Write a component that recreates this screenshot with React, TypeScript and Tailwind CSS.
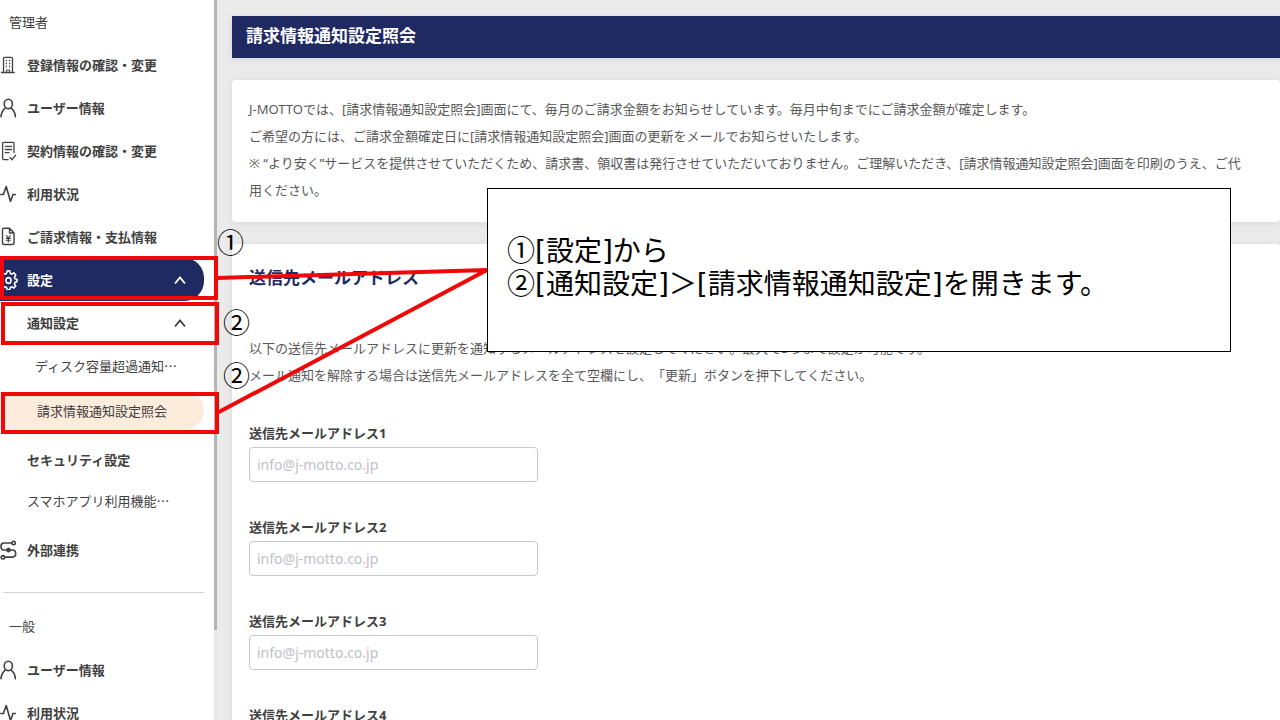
import type { ReactNode } from "react";

function Icon({ children }: { children: ReactNode }) {
  return (
    <svg
      viewBox="0 0 18 20"
      className="h-5 w-[18px] shrink-0"
      fill="none"
      stroke="currentColor"
      strokeWidth="1.6"
      strokeLinecap="round"
      strokeLinejoin="round"
      aria-hidden="true"
    >
      {children}
    </svg>
  );
}

const BuildingIcon = () => (
  <Icon>
    <path d="M3.500 17.300V3.500q0-1.200 1.200-1.200h6.600q1.200 0 1.200 1.200v13.800M1.500 17.500h12.700" strokeWidth="1.300" />
    <path d="M5.700 5.500h1.200M9 5.500h1.200M5.700 8.500h1.200M9 8.500h1.200M5.700 11.500h1.200M9 11.500h1.200" strokeWidth="1.500" strokeLinecap="butt" />
    <path d="M6.500 17.500v-2.500h3v2.500" strokeWidth="1" />
  </Icon>
);

const UserIcon = () => (
  <Icon>
    <ellipse cx="8.300" cy="5.900" rx="4.100" ry="4.700" />
    <path d="M1 18.700c.3-4.200 2.300-7.200 4.600-8.800M15.400 18.700c-.3-4.200-2.300-7.200-4.600-8.800" />
  </Icon>
);

const ContractIcon = () => (
  <Icon>
    <path d="M14 11.500V2.500q0-1.200-1.200-1.200H3.800Q2.600 1.300 2.600 2.500v14.800q0 1.400 1.300 1.400h4.300" strokeWidth="1.300" />
    <path d="M5.300 5.300h6.300M5.300 8.500h6.300M5.300 11.700h3.700M10 16.500l2.100 2.200 3.600-4.500" strokeWidth="1.300" />
  </Icon>
);

const ActivityIcon = () => (
  <Icon>
    <path d="M.8 10.500h2.600L6.200 2.500l4.300 15 2.500-7h2.400" />
  </Icon>
);

const BillIcon = () => (
  <Icon>
    <path d="M9.500 1.200H4Q2.500 1.200 2.500 2.700V16Q2.500 17.500 4 17.500h8.500q1.500 0 1.500-1.500V6L9.500 1.200V6H14" strokeWidth="1.400" />
    <path d="M6.300 8.500l2 2.700 2-2.700M8.300 11.200v3.800M6.300 11.400h4M6.300 13.200h4" strokeWidth="1.100" />
  </Icon>
);

const GearIcon = () => (
  <Icon>
    <path d="M7.200.9h2.500l.6 2.500 1.400.8 2.100-1.400 1.900 2.200-1.300 2.300.5 1.500 2.100.4v2.500l-2.100.6-.5 1.500 1.300 2.200-1.800 2.100-2.100-1.300-1.500.7-.6 2.300H7.200l-.6-2.300-1.500-.7L3 18.100 1.200 16l1.300-2.200-.5-1.500-1.800-.6V9.200L2 8.800l.5-1.500L1.200 5l1.900-2.200 2.100 1.400 1.400-.8z" />
    <ellipse cx="8.500" cy="10.500" rx="2.500" ry="2.900" />
  </Icon>
);

const LinkIcon = () => (
  <Icon>
    <circle cx="13.600" cy="3" r="1.700" />
    <circle cx="2.900" cy="17.300" r="1.700" />
    <path d="M11.700 3H4Q1 3 1 6.400T4 10h8.500q3.200 0 3.200 3.500t-3.200 3.600H5" />
    <ellipse cx="8.500" cy="10" rx="1.500" ry="1.700" fill="currentColor" />
  </Icon>
);

const Chevron = () => (
  <svg
    viewBox="0 0 12 10"
    className="h-[10px] w-3"
    fill="none"
    stroke="currentColor"
    strokeWidth="1.800"
    aria-hidden="true"
  >
    <path d="M1 8.500L6 2.500l5 6" />
  </svg>
);

function NavItem({ icon, label }: { icon: ReactNode; label: string }) {
  return (
    <a href="#" className="flex h-[43px] shrink-0 items-center gap-[9px] font-bold">
      {icon}
      {label}
    </a>
  );
}

function Sidebar() {
  return (
    <aside className="flex w-[217px] shrink-0 font-['Noto_Sans_CJK_JP',sans-serif]">
      <nav className="flex min-w-0 flex-1 flex-col overflow-hidden bg-white pr-[10px] text-[13px] whitespace-nowrap text-[#404040]">
        <h2 className="flex h-[43px] shrink-0 items-center pl-[9px]">管理者</h2>
        <NavItem icon={<BuildingIcon />} label="登録情報の確認・変更" />
        <NavItem icon={<UserIcon />} label="ユーザー情報" />
        <NavItem icon={<ContractIcon />} label="契約情報の確認・変更" />
        <NavItem icon={<ActivityIcon />} label="利用状況" />
        <NavItem icon={<BillIcon />} label="ご請求情報・支払情報" />
        <button
          type="button"
          aria-expanded="true"
          className="flex h-[43px] shrink-0 items-center gap-[9px] rounded-r-[20px] bg-[#1f2a63] pr-[18px] font-bold text-white"
        >
          <GearIcon />
          <span className="flex flex-1">設定</span>
          <Chevron />
        </button>
        <button
          type="button"
          aria-expanded="true"
          className="flex h-[43px] shrink-0 items-center pr-[18px] pl-[27px] font-bold"
        >
          <span className="flex flex-1">通知設定</span>
          <Chevron />
        </button>
        <a href="#" className="flex h-[43px] shrink-0 items-center pl-[35px]">
          ディスク容量超過通知…
        </a>
        <a href="#" aria-current="page" className="mt-[5px] flex h-[37px] shrink-0 items-center rounded-r-[18px] bg-[#fdebdb] pl-[37px]">
          請求情報通知設定照会
        </a>
        <a href="#" className="mt-[11px] flex h-10 shrink-0 items-center pl-[27px] font-bold">
          セキュリティ設定
        </a>
        <a href="#" className="flex h-[42px] shrink-0 items-center pl-[27px]">
          スマホアプリ利用機能…
        </a>
        <div className="mt-[6px] flex shrink-0 flex-col">
          <NavItem icon={<LinkIcon />} label="外部連携" />
        </div>
        <hr className="mt-[21px] ml-[3px] shrink-0 border-[#d4d4d4]" />
        <h2 className="mt-[11px] flex h-11 shrink-0 items-center pl-[9px]">一般</h2>
        <NavItem icon={<UserIcon />} label="ユーザー情報" />
        <NavItem icon={<ActivityIcon />} label="利用状況" />
      </nav>
      <div className="w-[3px] bg-[#e8e8e8]">
        <div className="h-[630px] bg-[#b4b4b4]" />
      </div>
    </aside>
  );
}

function Field({ n }: { n: number }) {
  const id = `mail-${n}`;
  return (
    <div className="flex h-[94px] shrink-0 flex-col">
      <label htmlFor={id} className="flex h-[27px] items-center font-bold text-[#404040]">
        送信先メールアドレス{n}
      </label>
      <input
        id={id}
        type="email"
        placeholder="info@j-motto.co.jp"
        className="h-[35px] w-[289px] rounded border border-[#c8c8cb] bg-white px-[7px] text-[14px] placeholder:text-[#bfc1c9]"
      />
    </div>
  );
}

function Content() {
  return (
    <main className="flex min-w-0 flex-1 flex-col overflow-hidden pt-4 pl-[15px] text-[13px] leading-[27px] text-[#595959]">
      <h1 className="flex h-[42px] shrink-0 items-center bg-[#1f2a63] px-[14px] pb-1 text-[17px] font-bold text-white shadow-[0_1px_6px_#d4d4d8]">
        請求情報通知設定照会
      </h1>
      <section className="mt-[22px] shrink-0 rounded bg-white pt-4 pr-[30px] pb-[18px] pl-[17px] shadow-[0_1px_8px_#d8d8d8]">
        <p>J-MOTTOでは、[請求情報通知設定照会]画面にて、毎月のご請求金額をお知らせしています。毎月中旬までにご請求金額が確定します。</p>
        <p>ご希望の方には、ご請求金額確定日に[請求情報通知設定照会]画面の更新をメールでお知らせいたします。</p>
        <p>
          ※ “より安く”サービスを提供させていただくため、請求書、領収書は発行させていただいておりません。ご理解いただき、[請求情報通知設定照会]画面を印刷のうえ、ご代用ください。
        </p>
      </section>
      <section className="mt-[22px] flex-1 shrink-0 rounded-t bg-white px-[17px] pt-5 shadow-[0_1px_8px_#d8d8d8]">
        <h2 className="text-[17px] font-bold text-[#1f2a63]">送信先メールアドレス</h2>
        <div className="mt-11">
          <p>以下の送信先メールアドレスに更新を通知するメールアドレスを設定してください。最大で5つまで設定が可能です。</p>
          <p>メール通知を解除する場合は送信先メールアドレスを全て空欄にし、「更新」ボタンを押下してください。</p>
        </div>
        <form className="mt-[31px]">
          {[1, 2, 3, 4].map((n) => (
            <Field key={n} n={n} />
          ))}
        </form>
      </section>
    </main>
  );
}

const Step = ({ mark }: { mark: string }) => (
  <span className="font-['Noto_Sans_CJK_JP',sans-serif] leading-none">{mark}</span>
);

function Annotations() {
  return (
    <div className="pointer-events-none absolute inset-0 text-[27px] leading-8 text-black">
      <div className="absolute top-[256px] left-0 h-11 w-[218px] border-4 border-[#f00808]" />
      <div className="absolute top-[302px] left-px h-[43px] w-[218px] border-4 border-[#f00808]" />
      <div className="absolute top-[392px] left-px h-[42px] w-[218px] border-4 border-[#f00808]" />
      <svg className="absolute top-0 left-0 h-[720px] w-[1280px]" viewBox="0 0 1280 720" stroke="#f00808" strokeWidth="4" aria-hidden="true">
        <path d="M217 278L487 270M217 413L487 270" fill="none" />
      </svg>
      <span className="absolute top-[227px] left-[217px]">①</span>
      <span className="absolute top-[307px] left-[223px]">②</span>
      <span className="absolute top-[360px] left-[223px]">②</span>
      <div className="absolute top-[188px] left-[487px] flex h-[164px] w-[744px] flex-col justify-center border border-black bg-white px-[19px] pb-1 font-['DejaVu_Sans','Noto_Sans_CJK_JP',sans-serif] text-[28px] leading-[33px]">
        <p>
          <Step mark="①" />
          [設定]から
        </p>
        <p>
          <Step mark="②" />
          [通知設定]＞[請求情報通知設定]を開きます。
        </p>
      </div>
    </div>
  );
}

export default function App() {
  return (
    <div
      className="relative flex h-screen overflow-hidden bg-[#ebebeb] font-['Noto_Sans','Noto_Sans_CJK_JP',sans-serif] [text-spacing-trim:space-all]"
      lang="ja"
    >
      <Sidebar />
      <Content />
      <Annotations />
    </div>
  );
}
